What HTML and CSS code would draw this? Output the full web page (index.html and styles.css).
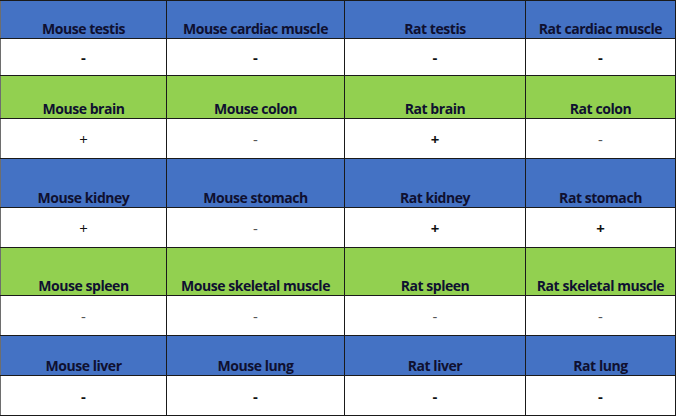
FILE: index.html
```html
<!DOCTYPE html>
<html>
<head>
<meta charset="utf-8">
<link rel="stylesheet" href="styles.css">
</head>
<body>
<table class="grid">
  <colgroup>
    <col class="c1"><col class="c2"><col class="c3"><col class="c4">
  </colgroup>
  <tr class="head blue r1">
    <th>Mouse testis</th><th>Mouse cardiac muscle</th><th class="mid">Rat testis</th><th>Rat cardiac muscle</th>
  </tr>
  <tr class="val r2">
    <td class="b">-</td><td class="b">-</td><td class="b mid">-</td><td class="b">-</td>
  </tr>
  <tr class="head green r3">
    <th>Mouse brain</th><th>Mouse colon</th><th class="mid">Rat brain</th><th>Rat colon</th>
  </tr>
  <tr class="val r4">
    <td>+</td><td class="lt">-</td><td class="b mid">+</td><td class="lt">-</td>
  </tr>
  <tr class="head blue r5">
    <th>Mouse kidney</th><th>Mouse stomach</th><th class="mid">Rat kidney</th><th>Rat stomach</th>
  </tr>
  <tr class="val r6">
    <td>+</td><td class="lt">-</td><td class="b mid">+</td><td class="b">+</td>
  </tr>
  <tr class="head green r7">
    <th>Mouse spleen</th><th>Mouse skeletal muscle</th><th class="mid">Rat spleen</th><th>Rat skeletal muscle</th>
  </tr>
  <tr class="val r8">
    <td class="lt">-</td><td class="lt">-</td><td class="lt mid">-</td><td class="lt">-</td>
  </tr>
  <tr class="head blue r9">
    <th>Mouse liver</th><th>Mouse lung</th><th class="mid">Rat liver</th><th>Rat lung</th>
  </tr>
  <tr class="val r10">
    <td class="b">-</td><td class="b">-</td><td class="b mid">-</td><td class="b">-</td>
  </tr>
</table>
</body>
</html>
```

FILE: styles.css
```css
html, body {
  margin: 0;
  padding: 0;
  background: #ffffff;
}

.grid {
  border-collapse: collapse;
  table-layout: fixed;
  width: 675px;
  font-family: "Open Sans", "Liberation Sans", sans-serif;
}

.c1 { width: 166px; }
.c2 { width: 178px; }
.c3 { width: 181px; }
.c4 { width: 150px; }

.grid th,
.grid td {
  border: 1px solid #1a1a1a;
  padding: 0;
  text-align: center;
  overflow: hidden;
  white-space: nowrap;
}

.grid th.mid,
.grid td.mid {
  border-left-color: #8a8a8a;
}

.grid tr > :first-child {
  border-left-color: #6e6e6e;
}

.head th {
  vertical-align: bottom;
  font-weight: 700;
  font-size: 14px;
  letter-spacing: -0.45px;
  line-height: 17px;
  padding-bottom: 1px;
  color: #0f1030;
}

.blue th { background: #4472c4; }
.green th { background: #92d050; }

.val td {
  vertical-align: middle;
  font-size: 15px;
  line-height: 18px;
  color: #111111;
  font-weight: 400;
}

.val td.b { font-weight: 700; }
.val td.lt { color: #555555; }

.r1 { height: 38px; }
.r2 { height: 37px; }
.r3 { height: 43px; }
.r4 { height: 40px; }
.r5 { height: 49px; }
.r6 { height: 40px; }
.r7 { height: 48px; }
.r8 { height: 40px; }
.r9 { height: 40px; }
.r10 { height: 40px; }
```
